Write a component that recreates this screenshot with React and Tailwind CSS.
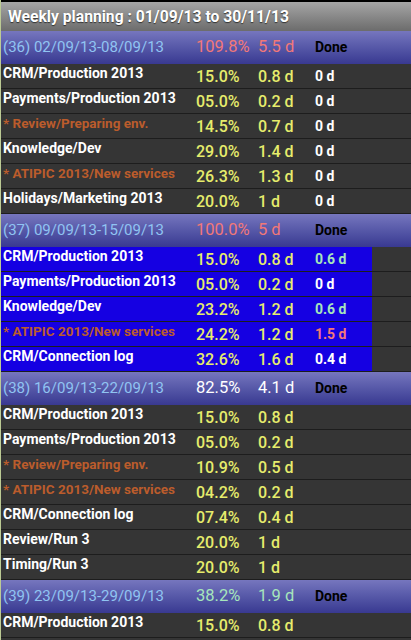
import React from 'react';

// weekly planning data, one block per week
const weeks = [
  {
    label: '(36) 02/09/13-08/09/13',
    pct: '109.8%',
    days: '5.5 d',
    tone: 'red',
    blue: false,
    rows: [
      { name: 'CRM/Production 2013', pct: '15.0%', days: '0.8 d', done: '0 d' },
      { name: 'Payments/Production 2013', pct: '05.0%', days: '0.2 d', done: '0 d' },
      { name: '* Review/Preparing env.', pct: '14.5%', days: '0.7 d', done: '0 d', star: true },
      { name: 'Knowledge/Dev', pct: '29.0%', days: '1.4 d', done: '0 d' },
      { name: '* ATIPIC 2013/New services', pct: '26.3%', days: '1.3 d', done: '0 d', star: true },
      { name: 'Holidays/Marketing 2013', pct: '20.0%', days: '1 d', done: '0 d' },
    ],
  },
  {
    label: '(37) 09/09/13-15/09/13',
    pct: '100.0%',
    days: '5 d',
    tone: 'red',
    blue: true,
    rows: [
      { name: 'CRM/Production 2013', pct: '15.0%', days: '0.8 d', done: '0.6 d', doneTone: 'green' },
      { name: 'Payments/Production 2013', pct: '05.0%', days: '0.2 d', done: '0 d' },
      { name: 'Knowledge/Dev', pct: '23.2%', days: '1.2 d', done: '0.6 d', doneTone: 'green' },
      { name: '* ATIPIC 2013/New services', pct: '24.2%', days: '1.2 d', done: '1.5 d', doneTone: 'red', star: true },
      { name: 'CRM/Connection log', pct: '32.6%', days: '1.6 d', done: '0.4 d' },
    ],
  },
  {
    label: '(38) 16/09/13-22/09/13',
    pct: '82.5%',
    days: '4.1 d',
    tone: 'white',
    blue: false,
    rows: [
      { name: 'CRM/Production 2013', pct: '15.0%', days: '0.8 d' },
      { name: 'Payments/Production 2013', pct: '05.0%', days: '0.2 d' },
      { name: '* Review/Preparing env.', pct: '10.9%', days: '0.5 d', star: true },
      { name: '* ATIPIC 2013/New services', pct: '04.2%', days: '0.2 d', star: true },
      { name: 'CRM/Connection log', pct: '07.4%', days: '0.4 d' },
      { name: 'Review/Run 3', pct: '20.0%', days: '1 d' },
      { name: 'Timing/Run 3', pct: '20.0%', days: '1 d' },
    ],
  },
  {
    label: '(39) 23/09/13-29/09/13',
    pct: '38.2%',
    days: '1.9 d',
    tone: 'green',
    blue: false,
    rows: [{ name: 'CRM/Production 2013', pct: '15.0%', days: '0.8 d' }],
  },
];

const toneClass = {
  red: 'text-[#f27878]',
  white: 'text-white',
  green: 'text-[#a6e6bc]',
};

const WeekHeader = ({ week }) => (
  <div className="flex h-[33px] items-center bg-gradient-to-b from-[#7676be] to-[#393991]">
    <div className="w-[195px] pl-[2px] text-[15px] text-[#90c4f2]">{week.label}</div>
    <div className={`w-[62px] text-[16.5px] ${toneClass[week.tone]}`}>{week.pct}</div>
    <div className={`w-[57px] text-[16.5px] ${toneClass[week.tone]}`}>{week.days}</div>
    <div className="text-[14px] font-bold text-black">Done</div>
  </div>
);

const TaskRow = ({ row, blue }) => (
  <div className="flex h-[25px] border-b border-[#1d1d1d]">
    <div className={`flex h-full ${blue ? 'w-[371px] bg-[#1500e2]' : 'w-full'}`}>
      <div
        className={`w-[195px] shrink-0 truncate pl-[2px] leading-[18px] font-bold ${
          row.star ? 'text-[13.5px] text-[#bb5c2c]' : 'text-[14px] text-white'
        }`}
      >
        {row.name}
      </div>
      <div className="w-[62px] shrink-0 pt-[3px] text-[16px] leading-[20px] font-medium text-[#e6ec6c]">{row.pct}</div>
      <div className="w-[57px] shrink-0 pt-[3px] text-[16px] leading-[20px] font-medium text-[#e6ec6c]">{row.days}</div>
      {row.done && (
        <div className={`pt-[3px] text-[14px] leading-[18px] font-bold ${toneClass[row.doneTone || 'white']}`}>
          {row.done}
        </div>
      )}
    </div>
  </div>
);

export default function App() {
  return (
    <div
      className="h-[640px] w-[411px] overflow-hidden border-l border-[#bccb94] bg-[#353535]"
      style={{ fontFamily: 'Roboto, "Noto Sans", sans-serif' }}
    >
      <div className="border-t-2 border-black">
        <div className="flex h-[29px] items-center bg-gradient-to-b from-[#a6a6a6] to-[#6c6c6c] pl-[7px] text-[15.7px] font-bold text-white [text-shadow:0_1px_1px_rgba(0,0,0,0.6)]">
          Weekly planning : 01/09/13 to 30/11/13
        </div>
      </div>
      {weeks.map((week) => (
        <div key={week.label}>
          <WeekHeader week={week} />
          {week.rows.map((row, i) => (
            <TaskRow key={i} row={row} blue={week.blue} />
          ))}
        </div>
      ))}
    </div>
  );
}
